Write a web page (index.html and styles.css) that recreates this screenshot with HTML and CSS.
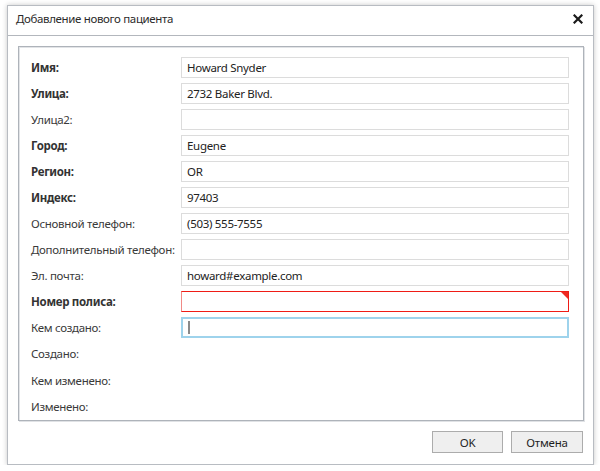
FILE: index.html
```html
<!DOCTYPE html>
<html>
<head>
<meta charset="utf-8">
<link rel="stylesheet" href="styles.css">
</head>
<body>
<div class="dialog">
  <div class="header">
    <span class="title">Добавление нового пациента</span>
    <svg class="close" width="10" height="10" viewBox="0 0 10 10"><path d="M1.5 1.5 L8.5 8.5 M8.5 1.5 L1.5 8.5" stroke="#1a1a1a" stroke-width="2.2" stroke-linecap="square"/></svg>
  </div>
  <div class="panel">
    <div class="row"><label class="bold">Имя:</label><div class="input">Howard Snyder</div></div>
    <div class="row"><label class="bold">Улица:</label><div class="input">2732 Baker Blvd.</div></div>
    <div class="row"><label>Улица2:</label><div class="input"></div></div>
    <div class="row"><label class="bold">Город:</label><div class="input">Eugene</div></div>
    <div class="row"><label class="bold">Регион:</label><div class="input">OR</div></div>
    <div class="row"><label class="bold">Индекс:</label><div class="input">97403</div></div>
    <div class="row"><label>Основной телефон:</label><div class="input">(503) 555-7555</div></div>
    <div class="row"><label>Дополнительный телефон:</label><div class="input"></div></div>
    <div class="row"><label>Эл. почта:</label><div class="input">howard#example.com</div></div>
    <div class="row"><label class="bold">Номер полиса:</label><div class="input invalid"><span class="flag"></span></div></div>
    <div class="row"><label>Кем создано:</label><div class="input focused"><span class="caret"></span></div></div>
    <div class="row"><label>Создано:</label></div>
    <div class="row"><label>Кем изменено:</label></div>
    <div class="row"><label>Изменено:</label></div>
  </div>
  <div class="footer">
    <button class="btn btn-ok">OK</button>
    <button class="btn btn-cancel">Отмена</button>
  </div>
</div>
</body>
</html>
```

FILE: styles.css
```css
html, body {
  margin: 0;
  padding: 0;
  background: #ffffff;
}
body {
  padding: 5px 6px 0 7px;
  font-family: "Noto Sans", "Open Sans", sans-serif;
  font-size: 11.5px;
  letter-spacing: -0.3px;
  color: #333;
}
.dialog {
  width: 587px;
  height: 460px;
  box-sizing: border-box;
  border: 1px solid #b8bcc2;
  background: #fff;
  box-shadow: 0 0 5px rgba(0,0,0,0.22);
  display: flex;
  flex-direction: column;
}
.header {
  height: 30px;
  box-sizing: border-box;
  border-bottom: 1px solid #b3b7bd;
  display: flex;
  align-items: center;
  justify-content: space-between;
  padding: 0 10px 4px 8px;
}
.title {
  color: #2b2b2b;
  font-size: 11.5px;
  letter-spacing: -0.35px;
}
.close {
  display: block;
}
.panel {
  margin: 10px 9px 0 10px;
  height: 375px;
  box-sizing: border-box;
  border: 1px solid #aeb3ba;
  box-shadow: inset 1px 1px 0 #e2e4e7, 1px 1px 0 #e0e2e5;
  padding: 10px 14px 0 12px;
  display: flex;
  flex-direction: column;
  gap: 5px;
}
.row {
  display: flex;
  align-items: center;
  height: 21px;
}
.row:nth-child(n+12) {
  height: 21.6px;
}
.row label {
  width: 150px;
  flex: none;
  color: #3a3a3a;
  white-space: nowrap;
}
.row label.bold {
  font-weight: bold;
  color: #333;
}
.input {
  flex: 1;
  height: 21px;
  box-sizing: border-box;
  border: 1px solid #dcdcdc;
  padding: 0 5px;
  display: flex;
  align-items: center;
  color: #222;
  position: relative;
}
.input.invalid {
  border: 1px solid #ef1c16;
  border-left-color: #f08a86;
}
.flag {
  position: absolute;
  top: 0;
  right: 0;
  width: 0;
  height: 0;
  border-top: 7px solid #ee2a22;
  border-left: 7px solid transparent;
}
.input.focused {
  border: 2px solid #9ed3ec;
  padding-left: 5px;
}
.caret {
  display: block;
  width: 2px;
  height: 13px;
  background: #8a8a8a;
}
.footer {
  display: flex;
  justify-content: flex-end;
  gap: 8px;
  padding: 10px 10px 0 0;
}
.btn {
  height: 22px;
  box-sizing: border-box;
  border: 1px solid #acacac;
  background: #efefef;
  font-family: "Noto Sans", "Open Sans", sans-serif;
  font-size: 11.5px;
  letter-spacing: -0.2px;
  color: #1f1f1f;
  padding: 0;
  margin: 0;
}
.btn-ok { width: 71px; }
.btn-cancel { width: 72px; }
```
